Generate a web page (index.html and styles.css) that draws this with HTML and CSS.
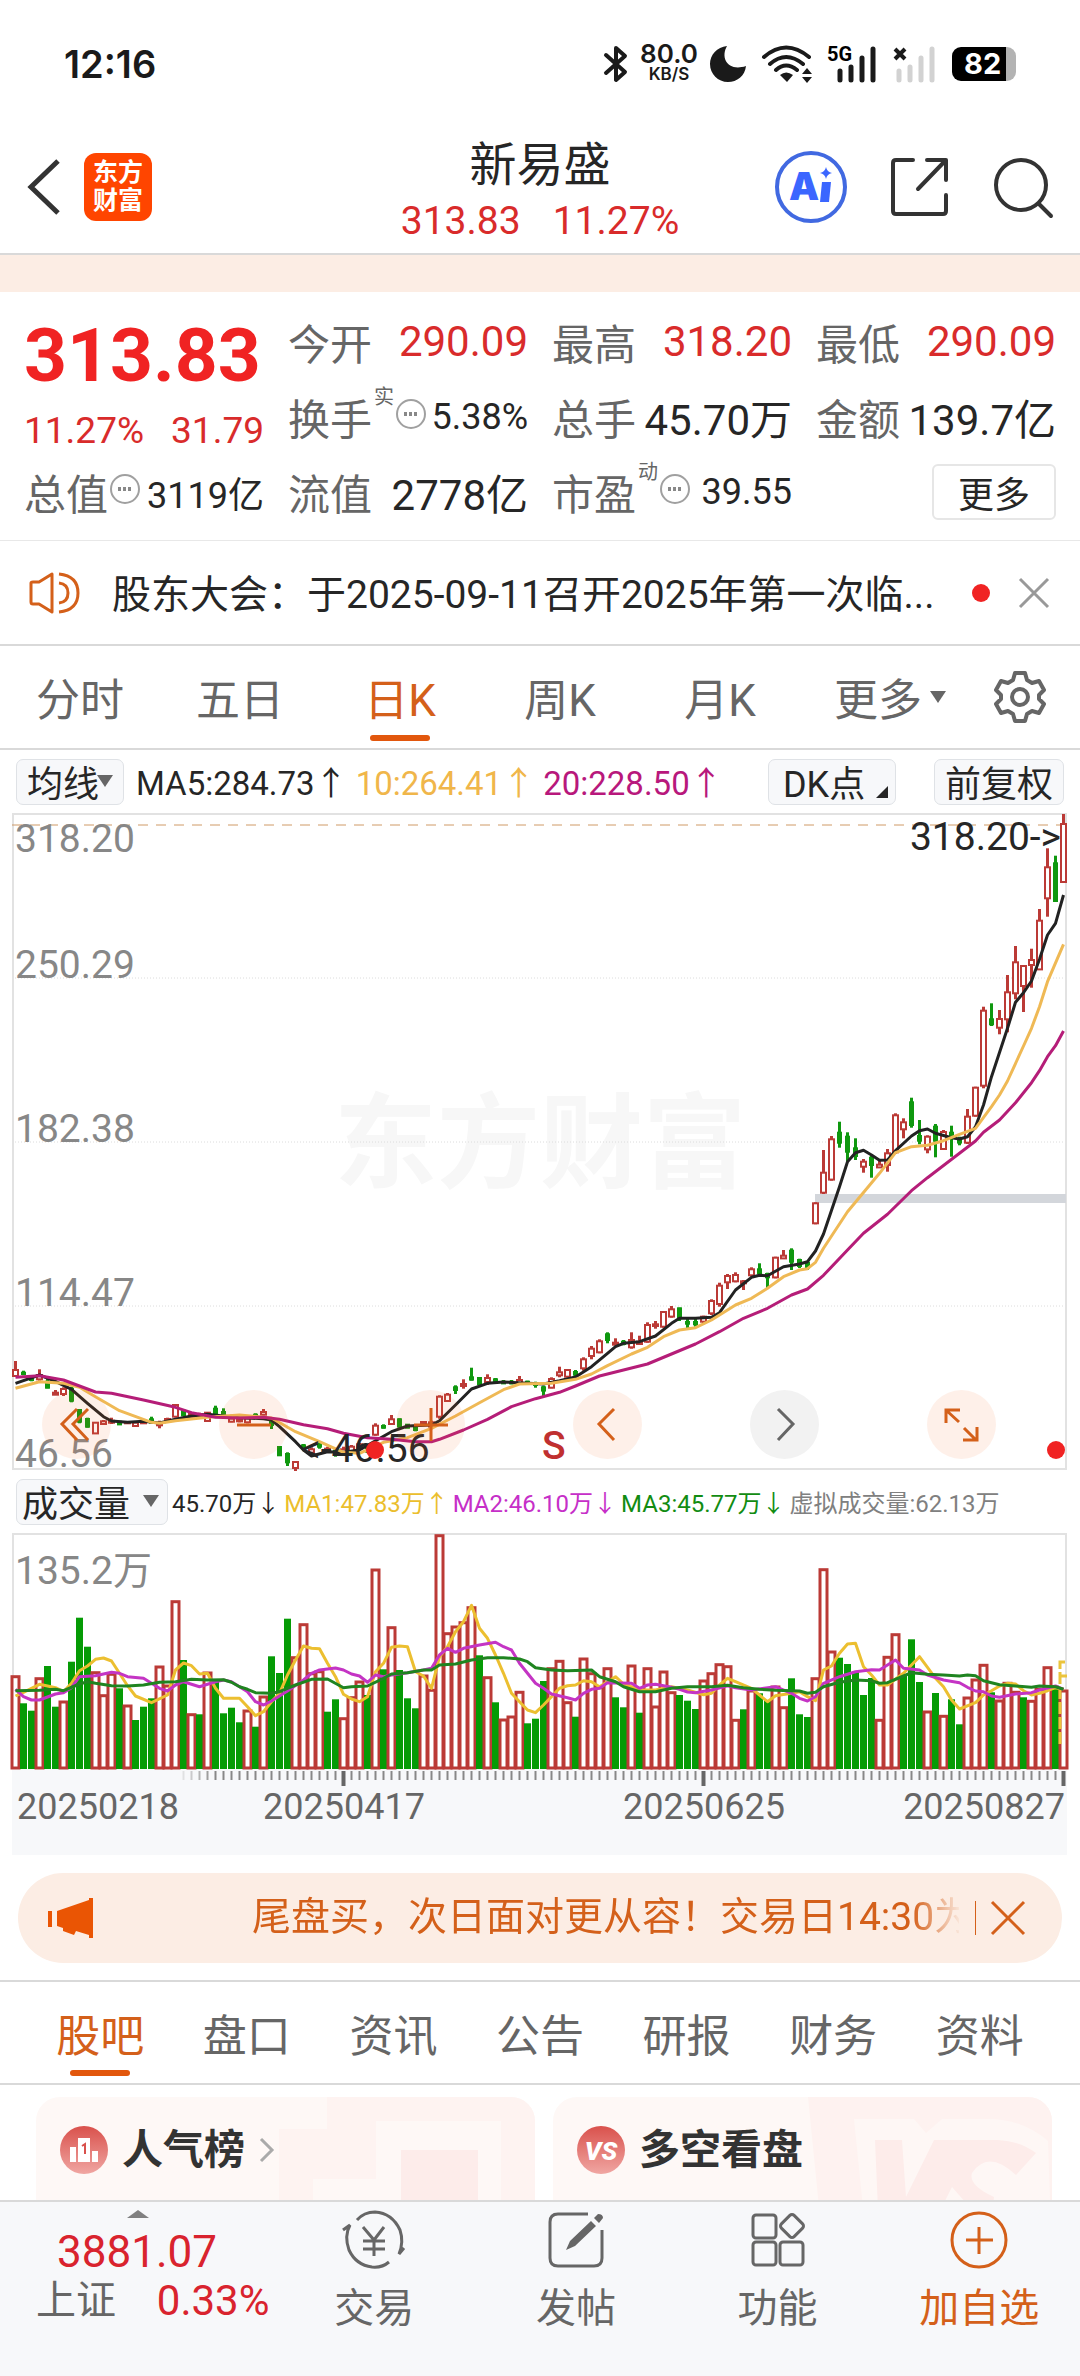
FILE: index.html
```html
<!DOCTYPE html>
<html lang="zh-CN">

<head>
    <meta charset="UTF-8">
    <meta name="viewport" content="width=device-width, initial-scale=1.0">
    <title>新易盛</title>
    <link rel="stylesheet" href="styles.css">
</head>

<body>
    <div class="status">
        <span class="clock">12:16</span>
        <div class="status-icons">
            <svg width="24" height="38" viewBox="0 0 24 38" fill="none" stroke="#1a1a1a" stroke-width="4" stroke-linejoin="round" stroke-linecap="round">
                <path d="M2 10 L21 27 L12 35 V3 L21 11 L2 28" />
            </svg>
            <div class="speed"><b>80.0</b><span>KB/S</span></div>
            <svg class="moon" width="38" height="38" viewBox="0 0 38 38">
                <path d="M18 1 C11 13 19 27 37 21 C36 31 28 37 19 37 C9 37 1 29 1 19 C1 10 8 2 18 1 Z" fill="#1a1a1a" />
            </svg>
            <svg class="wifi" width="52" height="38" viewBox="0 0 52 38" fill="none" stroke="#1a1a1a" stroke-width="4" stroke-linecap="round">
                <path d="M2 12 Q24 -7 47 12 M8 19 Q24 5 41 19 M14 25 Q24 16 35 25" />
                <path d="M18 30 Q24 25 31 30 L25 37 Z" fill="#1a1a1a" stroke="none" />
                <path d="M40 29 L45 23 L50 29 Z M40 32 L45 38 L50 32 Z" fill="#1a1a1a" stroke="none" />
            </svg>
            <svg class="signal" width="50" height="38" viewBox="0 0 50 38">
                <text x="0" y="16" class="net">5G</text>
                <path d="M13 35 V26 M24 35 V22 M35 35 V13 M46 35 V4" stroke="#1a1a1a" stroke-width="5" stroke-linecap="round" />
            </svg>
            <svg class="signal" width="43" height="38" viewBox="0 0 43 38">
                <path d="M2 4 L12 14 M12 4 L2 14" stroke="#1a1a1a" stroke-width="4" />
                <path d="M6 35 V26 M17 35 V22 M28 35 V13 M39 35 V4" stroke="#d2d2d2" stroke-width="5" stroke-linecap="round" />
            </svg>
            <div class="battery">82</div>
        </div>
    </div>

    <header class="header">
        <div class="header-left">
            <button class="icon-btn" aria-label="返回">
                <svg width="34" height="56" viewBox="0 0 34 56" fill="none" stroke="#333" stroke-width="5">
                    <path d="M31 2 L4 28 L31 54" />
                </svg>
            </button>
            <a href="#" class="logo">东方<br>财富</a>
        </div>
        <div class="title">
            <h1>新易盛</h1>
            <p class="up"><span>313.83</span><span>11.27%</span></p>
        </div>
        <div class="header-right">
            <button class="icon-btn" aria-label="AI">
                <svg width="72" height="72" viewBox="0 0 72 72">
                    <circle cx="36" cy="36" r="34" fill="none" stroke="#4169e1" stroke-width="4" />
                    <text x="14" y="49" class="ai">A</text>
                    <path d="M47 31 h9 l-2 20 h-9 z" fill="#3b66ff" />
                    <path d="M51 16 Q52 21 57 22 Q52 23 51 28 Q50 23 45 22 Q50 21 51 16 Z" fill="#3b66ff" />
                </svg>
            </button>
            <button class="icon-btn" aria-label="分享">
                <svg width="60" height="60" viewBox="0 0 60 60" fill="none" stroke="#333" stroke-width="4" stroke-linecap="round" stroke-linejoin="round">
                    <path d="M23 3 H6 Q3 3 3 6 V54 Q3 57 6 57 H53 Q56 57 56 54 V38 M37 3 H56 V23 M55 4 L28 32" />
                </svg>
            </button>
            <button class="icon-btn" aria-label="搜索">
                <svg width="60" height="60" viewBox="0 0 60 60" fill="none" stroke="#333" stroke-width="4" stroke-linecap="round">
                    <circle cx="28" cy="28" r="25" />
                    <path d="M46 47 L58 59" />
                </svg>
            </button>
        </div>
    </header>
    <div class="strip"></div>

    <section class="quote">
        <div class="price up">
            <strong>313.83</strong>
            <p><span>11.27%</span><span>31.79</span></p>
        </div>
        <div class="cell"><span>今开</span><b class="up">290.09</b></div>
        <div class="cell"><span>最高</span><b class="up">318.20</b></div>
        <div class="cell"><span>最低</span><b class="up">290.09</b></div>
        <div class="cell"><span>换手</span><sup>实</sup><i class="tip"></i><b class="small">5.38%</b></div>
        <div class="cell"><span>总手</span><b>45.70万</b></div>
        <div class="cell"><span>金额</span><b>139.7亿</b></div>
        <div class="cell"><span>总值</span><i class="tip"></i><b class="small">3119亿</b></div>
        <div class="cell"><span>流值</span><b>2778亿</b></div>
        <div class="cell"><span>市盈</span><sup>动</sup><i class="tip"></i><b class="small">39.55</b></div>
        <div class="cell"><button class="more">更多</button></div>
    </section>

    <section class="notice">
        <svg width="54" height="44" viewBox="0 0 54 44" fill="none" stroke="#d4601a" stroke-width="3" stroke-linejoin="round">
            <path d="M3 12 Q3 11 5 11 H11 L24 3 V41 L11 33 H5 Q3 33 3 31 Z M31 12 Q40 13 40 22 Q40 31 31 32 M31 3 Q50 5 50 22 Q50 39 31 41" />
        </svg>
        <a href="#">股东大会：于2025-09-11召开2025年第一次临...</a>
        <i class="dot"></i>
        <button class="icon-btn" aria-label="关闭">
            <svg width="32" height="32" viewBox="0 0 32 32" stroke="#999" stroke-width="3">
                <path d="M2 2 L30 30 M30 2 L2 30" />
            </svg>
        </button>
    </section>

    <nav class="periods">
        <button>分时</button>
        <button>五日</button>
        <button class="active">日K</button>
        <button>周K</button>
        <button>月K</button>
        <button>更多<i class="caret"></i></button>
        <button aria-label="设置">
            <svg width="54" height="54" viewBox="0 0 54 54" fill="none" stroke="#666" stroke-width="4" stroke-linejoin="round">
                <path d="M22 3 H32 L34 10 L39 13 L46 11 L51 20 L46 25 V29 L51 34 L46 43 L39 41 L34 44 L32 51 H22 L20 44 L15 41 L8 43 L3 34 L8 29 V25 L3 20 L8 11 L15 13 L20 10 Z" />
                <circle cx="27" cy="27" r="8" />
            </svg>
        </button>
    </nav>

    <div class="indicator">
        <button class="chip">均线<i class="caret"></i></button>
        <span class="ma5">MA5:284.73↑</span>
        <span class="ma10">10:264.41↑</span>
        <span class="ma20">20:228.50↑</span>
        <button class="chip dk">DK点<i class="corner"></i></button>
        <button class="chip">前复权</button>
    </div>

    <section class="chart">
        <svg id="kline" viewBox="0 0 1056 656"></svg>
        <div class="tools">
            <button aria-label="最左"><svg viewBox="0 0 69 69"><path d="M35 19 L20 34 L35 50 M46 19 L31 34 L46 50" /></svg></button>
            <button aria-label="缩小"><svg viewBox="0 0 69 69"><path d="M18 35 H52" /></svg></button>
            <button aria-label="放大"><svg viewBox="0 0 69 69"><path d="M18 35 H52 M35 18 V51" /></svg></button>
            <button aria-label="左移"><svg viewBox="0 0 69 69"><path d="M41 19 L26 34 L41 50" /></svg></button>
            <button aria-label="右移" class="off"><svg viewBox="0 0 69 69"><path d="M28 19 L43 34 L28 50" /></svg></button>
            <button aria-label="全屏"><svg viewBox="0 0 69 69"><path d="M19 33 V20 H33 M20 21 L32 32 M37 38 L49 50 M36 50 H50 V37" /></svg></button>
        </div>
    </section>

    <div class="indicator volume-info">
        <button class="chip">成交量<i class="caret"></i></button>
        <span class="v0">45.70万↓</span>
        <span class="v1">MA1:47.83万↑</span>
        <span class="v2">MA2:46.10万↓</span>
        <span class="v3">MA3:45.77万↓</span>
        <span class="v4">虚拟成交量:62.13万</span>
    </div>
    <section class="chart">
        <svg id="volume" viewBox="0 0 1056 321"></svg>
    </section>

    <aside class="banner">
        <svg width="48" height="40" viewBox="0 0 48 40" fill="#ea5504">
            <path d="M0 13 h4 v16 h-4 z M9 13 L41 2 V0 H45 V40 H41 V37 L28 33 L26 37 L15 33 V30 L9 28 Z" />
        </svg>
        <a href="#">尾盘买，次日面对更从容！交易日14:30为</a>
        <button class="icon-btn" aria-label="关闭">
            <svg width="34" height="34" viewBox="0 0 34 34" stroke="#d4601a" stroke-width="3">
                <path d="M1 1 L33 33 M33 1 L1 33" />
            </svg>
        </button>
    </aside>

    <nav class="tabs">
        <button class="active">股吧</button>
        <button>盘口</button>
        <button>资讯</button>
        <button>公告</button>
        <button>研报</button>
        <button>财务</button>
        <button>资料</button>
    </nav>

    <main class="feed">
        <a href="#" class="card">
            <svg class="deco" width="256" height="160" viewBox="0 0 256 160">
                <path d="M48 0 H256 V160 H0 V32 H48 Z" fill="#fef3f1" />
                <path d="M97 24 H222 V160 H34 V82 H97 Z" fill="#fef8f6" />
                <path d="M122 53 H199 V160 H122 Z" fill="#fdecea" />
            </svg>
            <svg width="48" height="48" viewBox="0 0 48 48">
                <defs>
                    <linearGradient id="red" x2="0" y2="1">
                        <stop offset="0" stop-color="#d9514c" />
                        <stop offset="1" stop-color="#f0a6a2" />
                    </linearGradient>
                </defs>
                <circle cx="24" cy="24" r="24" fill="url(#red)" />
                <path d="M10 21 h6 v15 h-6 z M18 12 h12 v24 h-12 z M32 25 h6 v11 h-6 z" fill="#fff" />
                <path d="M22 20 l3 -2 v10" fill="none" stroke="#d9514c" stroke-width="2" />
            </svg>
            <h2>人气榜</h2>
            <svg class="arrow" width="16" height="24" viewBox="0 0 16 24" fill="none" stroke="#aaa" stroke-width="3">
                <path d="M2 1 L13 12 L2 23" />
            </svg>
        </a>
        <a href="#" class="card">
            <svg class="deco" width="244" height="160" viewBox="0 0 244 160">
                <path d="M0 0 H244 V160 H16 Z" fill="#fef2f0" />
                <path d="M46 22 H106 L118 36 L134 22 H180 Q215 22 240 44 L244 160 H60 Z" fill="#fef7f5" />
                <path d="M67 43 H94 L98 100 L126 43 H190 Q212 44 228 56 L208 78 Q180 52 164 76 Q160 88 186 100 L180 160 H72 Z" fill="#fdecea" />
                <path d="M144 90 L158 106 H136 Z" fill="#fef7f5" />
            </svg>
            <svg width="48" height="48" viewBox="0 0 48 48">
                <circle cx="24" cy="24" r="24" fill="url(#red)" />
                <text x="24" y="34" class="vs">VS</text>
            </svg>
            <h2>多空看盘</h2>
        </a>
    </main>

    <footer class="bottom">
        <a href="#" class="index">
            <i class="caret-up"></i>
            <b>3881.07</b>
            <span class="name">上证</span><span class="pct">0.33%</span>
        </a>
        <a href="#">
            <svg width="64" height="60" viewBox="0 0 64 60" fill="none" stroke="#666" stroke-width="3">
                <path d="M15 10 Q22 2 33 2 Q50 3 58 20 Q62 32 57 44 L62 38 M47 52 Q40 58 30 57 Q14 55 7 40 Q2 26 8 15 L1 20" />
                <path d="M21 17 L32 30 L42 17 M32 30 V46 M21 31 H43 M21 39 H43" />
            </svg>
            交易
        </a>
        <a href="#">
            <svg width="60" height="60" viewBox="0 0 60 60" fill="none" stroke="#666" stroke-width="3">
                <path d="M42 4 H12 Q4 4 4 12 V48 Q4 56 12 56 H48 Q56 56 56 48 V20" />
                <path d="M20 40 L24 31 L45 11 L50 16 L29 36 Z M48 8 L52 4 Q57 4 57 8 L53 13 Z" fill="#666" stroke="none" />
            </svg>
            发帖
        </a>
        <a href="#">
            <svg width="60" height="60" viewBox="0 0 60 60" fill="none" stroke="#666" stroke-width="3">
                <rect x="5" y="5" width="23" height="23" rx="3" />
                <rect x="5" y="32" width="23" height="23" rx="3" />
                <rect x="32" y="32" width="23" height="23" rx="3" />
                <rect x="35" y="7" width="18" height="18" rx="3" transform="rotate(45 44 16)" />
            </svg>
            功能
        </a>
        <a href="#" class="add">
            <svg width="60" height="60" viewBox="0 0 60 60" fill="none" stroke="#d4601a" stroke-width="3">
                <circle cx="30" cy="30" r="27" />
                <path d="M17 30 H44 M30 17 V44" />
            </svg>
            加自选
        </a>
    </footer>

    <script src="script.js"></script>
</body>

</html>
```
FILE: styles.css
```css
* {
    box-sizing: border-box;
    font-family: Roboto, "Noto Sans CJK SC", sans-serif;
}

body,
html {
    margin: 0;
}

body {
    display: flex;
    flex-direction: column;
    height: 100vh;
    overflow: hidden;
    background-color: #fff;
    color: #262626;
}

body > * {
    flex-shrink: 0;
}

h1,
h2,
p {
    margin: 0;
    font-weight: 400;
}

b,
i {
    font-weight: 400;
    font-style: normal;
}

a {
    color: inherit;
    text-decoration: none;
}

svg {
    display: block;
    overflow: visible;
}

button {
    cursor: pointer;
    padding: 0;
    border: 0;
    background: none;
    color: inherit;
}

.up {
    color: #d92b2b;
}

/* status bar */
.status {
    display: flex;
    justify-content: space-between;
    align-items: center;
    height: 128px;
    padding: 0 64px;
    color: #1a1a1a;
}

.clock {
    font-family: Inter, sans-serif;
    font-size: 38px;
    font-weight: 600;
}

.status-icons {
    display: flex;
    align-items: center;
}

.speed {
    display: flex;
    flex-direction: column;
    align-items: center;
    width: 58px;
    margin: 0 11px 0 12px;
}

.speed b,
.speed span {
    font-family: Inter, sans-serif;
    font-size: 26px;
    font-weight: 600;
    line-height: 20px;
}

.speed span {
    font-size: 17px;
}

.moon {
    margin-right: 15px;
}

.wifi {
    margin-right: 13px;
}

.signal {
    margin-right: 16px;
}

.net {
    font-family: "Roboto";
    font-size: 20px;
    font-weight: 700;
}

.battery {
    width: 64px;
    height: 34px;
    padding-left: 12px;
    border-radius: 9px;
    background: linear-gradient(to right, #000 54px, #b3b3b3 54px);
    color: #fff;
    font-family: Inter, sans-serif;
    font-size: 29px;
    font-weight: 700;
    line-height: 34px;
}

/* header */
.header {
    display: grid;
    grid-template-columns: 1fr auto 1fr;
    align-items: center;
    height: 127px;
    padding: 0 27px;
    border-bottom: 2px solid #d9d9d9;
}

.header-left,
.header-right {
    display: flex;
    align-items: center;
    padding-bottom: 8px;
}

.header-right {
    justify-content: flex-end;
    gap: 43px;
}

.logo {
    width: 68px;
    height: 68px;
    margin-left: 23px;
    padding-top: 6px;
    border-radius: 12px;
    background-color: #ff4500;
    color: #fff;
    font-size: 25px;
    font-weight: 700;
    line-height: 28px;
    text-align: center;
}

.title {
    padding-top: 4px;
    text-align: center;
    line-height: 57px;
}

.title h1 {
    font-size: 47px;
}

.title p {
    display: flex;
    gap: 32px;
    font-size: 39px;
}

.ai {
    fill: #3b66ff;
    font-family: Inter, sans-serif;
    font-size: 38px;
    font-weight: 900;
}

.strip {
    height: 37px;
    background-color: #fcede4;
}

/* quote */
.quote {
    display: grid;
    grid-template-columns: repeat(4, 1fr);
    grid-auto-rows: 75px;
    column-gap: 24px;
    padding: 12px 24px 11px;
    border-bottom: 1px solid #e8e8e8;
}

.price {
    grid-row: span 2;
}

.price strong {
    display: block;
    color: #f02323;
    font-size: 75px;
    font-weight: 700;
    line-height: 102px;
}

.price p {
    display: flex;
    justify-content: space-between;
    font-size: 37px;
    line-height: 50px;
}

.cell {
    display: flex;
    align-items: center;
    gap: 2px;
    font-size: 42px;
    white-space: nowrap;
}

.cell span {
    color: #666;
}

.cell b,
.cell button {
    margin-left: auto;
}

.cell .small {
    font-size: 36px;
}

.cell sup {
    align-self: flex-start;
    color: #666;
    font-size: 20px;
    line-height: 36px;
}

.tip {
    position: relative;
    width: 30px;
    height: 30px;
    margin-bottom: 6px;
    border: 2px solid #a0a0a0;
    border-radius: 50%;
}

.tip::after {
    content: "";
    position: absolute;
    left: 5px;
    top: 11px;
    width: 16px;
    height: 4px;
    background: radial-gradient(circle, #888 2px, transparent 2px) 0 0 / 5px 4px;
}

.more {
    width: 124px;
    height: 56px;
    padding-bottom: 6px;
    border: 2px solid #e6e6e6;
    border-radius: 6px;
    font-size: 36px;
}

/* notice */
.notice {
    display: flex;
    align-items: center;
    height: 105px;
    padding: 0 30px 0 28px;
    border-bottom: 2px solid #d9d9d9;
    font-size: 39px;
}

.notice a {
    flex: 1;
    margin-left: 30px;
    padding-bottom: 4px;
    overflow: hidden;
    white-space: nowrap;
}

.dot {
    width: 18px;
    height: 18px;
    margin-right: 28px;
    border-radius: 50%;
    background-color: #f02323;
}

/* period tabs */
.periods {
    display: grid;
    grid-template-columns: repeat(5, 16fr) 18fr 8fr;
    height: 104px;
    padding-right: 20px;
    border-bottom: 2px solid #d9d9d9;
}

.periods button,
.tabs button {
    display: flex;
    position: relative;
    align-items: center;
    justify-content: center;
    color: #666;
    font-size: 44px;
}

.periods .active,
.tabs .active {
    color: #d4601a;
}

.periods .active::after,
.tabs .active::after {
    content: "";
    position: absolute;
    bottom: 7px;
    width: 60px;
    height: 6px;
    border-radius: 3px;
    background-color: #e2570d;
}

.caret {
    margin-left: 8px;
    border: 8px solid transparent;
    border-top: 12px solid #666;
    border-bottom: 0;
}

/* indicator rows */
.indicator {
    display: flex;
    align-items: center;
    height: 64px;
    padding: 0 16px;
    font-size: 33px;
    white-space: nowrap;
}

.indicator span {
    margin-right: 8px;
    padding-bottom: 2px;
}

.chip {
    display: flex;
    position: relative;
    align-items: center;
    height: 46px;
    margin-right: 12px;
    padding: 0 10px 2px;
    border: 1px solid #dfe2e6;
    border-radius: 7px;
    background-color: #f7f8fa;
    font-size: 36px;
}

.chip:last-child {
    margin-right: 0;
}

.chip .caret {
    margin: 0 0 0 -2px;
}

.indicator .dk {
    width: 128px;
    margin: 0 38px 0 auto;
    padding-left: 14px;
}

.corner {
    position: absolute;
    right: 7px;
    bottom: 6px;
    border-left: 12px solid transparent;
    border-bottom: 12px solid #262626;
}

.ma10 {
    color: #f0b64a;
}

.ma20 {
    color: #b8187c;
}

.volume-info {
    font-size: 24px;
}

.volume-info span {
    margin-right: 4px;
}

.volume-info .chip {
    width: 152px;
    margin-right: 4px;
    padding: 0 8px 2px 5px;
    justify-content: space-between;
}

.v1 {
    color: #ebbe2d;
}

.v2 {
    color: #c62fc8;
}

.v3 {
    color: #128c12;
}

.v4 {
    color: #808080;
}

/* charts */
.chart {
    position: relative;
    margin: 0 12px;
}

.chart > svg {
    width: 100%;
    height: auto;
}

.frame {
    fill: none;
    stroke: #e2e2e2;
    stroke-width: 2;
}

.grid {
    stroke: #dcdcdc;
    stroke-dasharray: 1 2;
}

.last {
    stroke: #cf9a66;
    stroke-dasharray: 10 8;
}

.band {
    fill: #d3d6db;
}

.axis {
    fill: #878787;
    font-size: 39px;
}

.mark {
    fill: #262626;
    font-size: 39px;
}

.sell {
    fill: #c03030;
    font-size: 39px;
    font-weight: 500;
}

.date {
    fill: #666;
    font-size: 36px;
}

.watermark {
    fill: #f7f7f7;
    font-size: 103px;
    font-weight: 700;
}

.wick {
    stroke-width: 3;
}

.rise {
    fill: #fff;
    stroke: #bb3a36;
    stroke-width: 2;
}

.fall {
    fill: #0f980f;
    stroke: #0f980f;
    stroke-width: 2;
}

.rise.wick,
.fall.wick,
.bar-rise {
    stroke-width: 3;
}

.bar-rise {
    fill: #fff;
    stroke: #bb3a36;
}

.bar-fall {
    fill: #059b05;
}

.line {
    fill: none;
    stroke-width: 3;
    stroke-linejoin: round;
}

.tools {
    display: flex;
    position: absolute;
    justify-content: space-between;
    bottom: 11px;
    left: 30px;
    right: 72px;
}

.tools button {
    width: 69px;
    height: 69px;
    border-radius: 50%;
    background-color: rgba(250, 110, 40, 0.1);
}

.tools .off {
    background-color: #f2f2f2;
}

.tools path {
    fill: none;
    stroke: #d4601a;
    stroke-width: 3;
}

.tools .off path {
    stroke: #666;
}

/* banner */
.banner {
    display: flex;
    align-items: center;
    height: 90px;
    margin: 18px 18px 17px;
    padding: 0 37px 0 30px;
    border-radius: 45px;
    background-color: #fcede4;
    color: #d4601a;
    font-size: 39px;
}

.banner a {
    flex: 1;
    height: 60px;
    margin: 0 16px 0 156px;
    overflow: hidden;
    line-height: 58px;
    white-space: nowrap;
    -webkit-mask-image: linear-gradient(to right, #000 660px, transparent 710px);
    mask-image: linear-gradient(to right, #000 660px, transparent 710px);
}

.banner button {
    padding-left: 15px;
    border-left: 1px solid #d4601a;
}

/* content tabs */
.tabs {
    display: grid;
    grid-template-columns: repeat(7, 1fr);
    height: 105px;
    padding: 0 27px;
    border-top: 2px solid #d9d9d9;
    border-bottom: 2px solid #d9d9d9;
}

.feed {
    display: grid;
    flex: 1 1 0;
    grid-template-columns: 1fr 1fr;
    gap: 18px;
    min-height: 0;
    padding: 12px 28px 0 36px;
    overflow: hidden;
}

.card {
    display: flex;
    position: relative;
    height: 160px;
    padding: 29px 24px 0;
    overflow: hidden;
    border-radius: 24px;
    background-color: #fef8f6;
}

.card > svg,
.card h2 {
    position: relative;
}

.card .deco {
    position: absolute;
    right: 0;
    top: 0;
}

.card h2 {
    margin-left: 14px;
    color: #333;
    font-size: 41px;
    font-weight: 700;
    line-height: 48px;
}

.card .arrow {
    margin: 12px 0 0 14px;
}

.vs {
    fill: #fff;
    font-size: 26px;
    font-style: italic;
    font-weight: 900;
    text-anchor: middle;
}

/* bottom bar */
.bottom {
    display: grid;
    grid-template-columns: 274fr repeat(4, 202fr);
    height: 176px;
    border-top: 2px solid #d9d9d9;
    background-color: #f7f8fa;
    color: #666;
}

.bottom a {
    display: flex;
    flex-direction: column;
    align-items: center;
    padding-top: 8px;
    font-size: 40px;
    line-height: 78px;
}

.bottom .add {
    color: #d4601a;
}

.bottom .index {
    display: grid;
    grid-template-columns: auto auto;
    align-content: start;
    justify-content: space-between;
    padding: 8px 4px 0 36px;
    line-height: 50px;
}

.caret-up {
    grid-column: span 2;
    justify-self: center;
    margin-right: 29px;
    border: 11px solid transparent;
    border-top: 0;
    border-bottom: 8px solid #808080;
}

.index b {
    grid-column: span 2;
    padding: 10px 0 0 21px;
    color: #d9232e;
    font-size: 44px;
    line-height: 48px;
}

.pct {
    color: #d9232e;
    font-size: 42px;
}
```
FILE: script.js
```js
// every value is in thirds of a pixel, one trading day is 8px wide
const day = (i) => 3.5 + i * 8
const px = (v) => +(v / 3).toFixed(1)
const shift = (by, rows) => rows.map(([dir, ...ys]) => [dir, ...ys.map((y) => y + by)])

// direction, high, body top, body bottom, low
const candles = [
    ...shift(1428, [
        ['r', 213, 240, 258, 258], ['g', 242, 248, 252, 256], ['g', 258, 262, 270, 274], ['r', 238, 255, 268, 272],
        ['g', 260, 275, 293, 295], ['r', 300, 308, 314, 314], ['r', 292, 297, 312, 318], ['g', 290, 296, 332, 337],
        ['g', 358, 360, 395, 400], ['g', 383, 387, 410, 413], ['r', 396, 398, 430, 432], ['r', 390, 394, 402, 402],
        ['r', 383, 392, 398, 402], ['g', 393, 395, 403, 404], ['r', 394, 397, 400, 402], ['r', 395, 398, 408, 409],
        ['r', 393, 396, 400, 402], ['g', 380, 388, 398, 400], ['r', 392, 400, 406, 415], ['r', 383, 387, 395, 398],
        ['r', 342, 345, 380, 382], ['g', 358, 362, 376, 378], ['r', 368, 372, 380, 382], ['r', 368, 372, 378, 380],
        ['r', 366, 368, 393, 394], ['g', 347, 356, 370, 374], ['g', 355, 366, 374, 376], ['r', 374, 386, 395, 397],
        ['r', 384, 388, 394, 397], ['r', 380, 385, 397, 400], ['g', 370, 374, 378, 380], ['r', 357, 366, 374, 376],
        ['g', 385, 390, 405, 417], ['g', 468, 471, 496, 498], ['g', 487, 492, 517, 528], ['r', 513, 516, 534, 543],
        ['g', 462, 466, 475, 480], ['r', 472, 478, 488, 492], ['g', 457, 464, 470, 476], ['r', 470, 476, 484, 486],
        ['g', 475, 482, 492, 500], ['r', 470, 478, 486, 490], ['r', 465, 470, 486, 490], ['r', 458, 463, 475, 478],
        ['g', 470, 475, 485, 488], ['r', 400, 407, 434, 437], ['g', 403, 408, 413, 416], ['r', 375, 388, 402, 405],
        ['g', 385, 388, 410, 413], ['g', 402, 404, 413, 415], ['g', 405, 412, 420, 424], ['r', 393, 396, 402, 405],
        ['r', 392, 397, 410, 415], ['r', 316, 320, 380, 386], ['r', 309, 314, 333, 336], ['g', 286, 292, 300, 312],
        ['r', 268, 282, 288, 296], ['g', 233, 262, 269, 272], ['g', 262, 264, 283, 286], ['r', 253, 264, 276, 285],
        ['g', 264, 268, 275, 278], ['g', 270, 275, 280, 282], ['g', 270, 275, 280, 283], ['r', 258, 270, 280, 284],
        ['g', 272, 275, 280, 282], ['g', 275, 280, 285, 293]
    ]),
    ...shift(978, [
        ['g', 737, 742, 752, 768], ['r', 712, 717, 743, 745], ['r', 680, 697, 706, 712], ['r', 688, 690, 710, 712],
        ['g', 690, 696, 704, 708], ['r', 652, 658, 685, 692], ['r', 618, 626, 648, 658], ['r', 598, 604, 637, 640],
        ['g', 577, 583, 600, 610], ['r', 595, 608, 614, 616], ['g', 600, 605, 612, 616], ['r', 577, 600, 622, 626],
        ['r', 587, 605, 612, 613], ['r', 547, 555, 605, 608], ['r', 543, 553, 558, 566], ['r', 513, 516, 560, 563],
        ['r', 498, 508, 530, 533], ['g', 503, 505, 535, 543], ['g', 537, 546, 551, 568], ['g', 537, 546, 553, 560],
        ['r', 527, 530, 545, 553], ['r', 478, 483, 520, 525], ['r', 428, 437, 492, 500], ['r', 402, 408, 427, 447],
        ['r', 397, 405, 424, 427], ['r', 420, 424, 430, 450], ['r', 382, 388, 406, 410], ['g', 370, 388, 400, 403],
        ['g', 398, 402, 412, 447], ['r', 350, 353, 412, 415], ['r', 330, 347, 355, 357], ['g', 325, 332, 365, 390],
        ['g', 356, 360, 378, 384], ['g', 363, 368, 383, 390], ['r', 187, 190, 250, 253]
    ]),
    ...shift(-42, [
        ['r', 1050, 1118, 1178, 1182], ['r', 1008, 1018, 1139, 1142], ['g', 965, 998, 1028, 1043], ['g', 997, 1010, 1055, 1083],
        ['g', 1015, 1045, 1068, 1080], ['r', 1077, 1085, 1100, 1118], ['g', 1068, 1073, 1095, 1133], ['r', 1082, 1094, 1102, 1103],
        ['r', 1047, 1060, 1095, 1115], ['r', 940, 946, 1057, 1062], ['r', 955, 967, 988, 1015], ['g', 893, 907, 975, 983],
        ['g', 960, 1008, 1022, 1033], ['r', 1006, 1010, 1048, 1060], ['g', 972, 980, 1022, 1072], ['r', 990, 996, 1047, 1050],
        ['g', 977, 998, 1012, 1070], ['g', 1010, 1018, 1028, 1036], ['r', 927, 950, 1028, 1032], ['r', 860, 863, 947, 950],
        ['r', 620, 632, 857, 865], ['g', 610, 658, 673, 678], ['r', 630, 657, 683, 703], ['r', 525, 577, 658, 697],
        ['r', 438, 487, 580, 598], ['r', 495, 498, 558, 636], ['r', 446, 480, 495, 563], ['r', 327, 362, 508, 510],
        ['r', 145, 202, 295, 350], ['g', 167, 190, 303, 305], ['r', 42, 72, 246, 248]
    ])
]

// day, y
const ma5 = [[0, 1708], [3, 1683], [5, 1702], [7, 1726], [9, 1768], [11, 1808], [12, 1821], [14, 1825], [16, 1822], [18, 1827], [20, 1816], [22, 1806], [24, 1801], [26, 1806], [28, 1811], [31, 1814], [32, 1818], [33, 1838], [35, 1883], [36, 1908], [37, 1926], [39, 1913], [41, 1915], [43, 1908], [45, 1880], [47, 1853], [49, 1836], [52, 1833], [53, 1820], [55, 1773], [57, 1725], [59, 1708], [61, 1704], [66, 1710], [68, 1700], [70, 1689], [72, 1658], [74, 1618], [75, 1598], [76, 1588], [78, 1583], [80, 1566], [82, 1528], [83, 1513], [85, 1513], [87, 1510], [88, 1496], [90, 1428], [92, 1390], [93, 1384], [94, 1385], [96, 1358], [98, 1350], [99, 1343], [100, 1311], [101, 1260], [103, 1118], [104, 1043], [105, 1016], [106, 1009], [107, 1023], [108, 1039], [109, 1038], [110, 1010], [112, 966], [113, 950], [114, 945], [115, 958], [117, 971], [118, 975], [119, 968], [120, 938], [121, 873], [122, 788], [124, 643], [125, 565], [126, 536], [127, 501], [128, 436], [129, 363], [130, 328], [131, 243]]
const ma10 = [[0, 1723], [3, 1703], [6, 1708], [8, 1720], [10, 1748], [13, 1790], [17, 1825], [18, 1828], [20, 1820], [24, 1810], [28, 1803], [32, 1812], [35, 1853], [38, 1883], [41, 1915], [43, 1918], [46, 1885], [49, 1871], [52, 1843], [55, 1806], [58, 1766], [61, 1727], [63, 1710], [67, 1708], [70, 1696], [72, 1680], [74, 1655], [77, 1620], [79, 1600], [81, 1568], [83, 1548], [85, 1541], [87, 1518], [90, 1473], [92, 1453], [94, 1423], [96, 1388], [98, 1368], [99, 1364], [100, 1345], [101, 1303], [104, 1193], [108, 1078], [110, 1016], [112, 998], [114, 994], [116, 980], [118, 961], [120, 943], [122, 878], [123, 843], [124, 801], [126, 696], [127, 643], [128, 578], [129, 503], [131, 391]]
const ma20 = [[0, 1690], [3, 1685], [6, 1698], [10, 1734], [12, 1738], [16, 1758], [20, 1780], [22, 1796], [25, 1810], [28, 1812], [31, 1810], [33, 1816], [36, 1832], [39, 1844], [41, 1858], [44, 1871], [47, 1876], [50, 1883], [52, 1883], [53, 1876], [56, 1848], [59, 1816], [62, 1778], [65, 1754], [68, 1735], [70, 1716], [73, 1686], [76, 1668], [79, 1650], [82, 1620], [85, 1590], [88, 1553], [91, 1513], [94, 1483], [97, 1443], [99, 1425], [101, 1384], [104, 1308], [106, 1258], [109, 1201], [112, 1130], [114, 1091], [118, 1018], [120, 981], [121, 955], [123, 918], [125, 866], [127, 806], [128, 770], [129, 728], [130, 695], [131, 651]]

// top of each volume bar, green ones are listed in fallDays
const volumes = [467, 550, 572, 473, 438, 560, 543, 425, 293, 380, 455, 524, 460, 505, 555, 600, 560, 535, 438, 495, 242, 420, 581, 583, 456, 480, 580, 563, 607, 570, 620, 528, 409, 459, 296, 410, 311, 458, 452, 575, 538, 593, 530, 483, 525, 147, 448, 320, 450, 535, 565, 465, 508, 44, 338, 318, 305, 260, 406, 470, 547, 597, 588, 514, 610, 596, 483, 443, 421, 545, 590, 414, 458, 500, 443, 532, 562, 435, 578, 443, 558, 453, 515, 525, 542, 567, 480, 458, 431, 437, 598, 568, 510, 520, 540, 498, 560, 475, 583, 591, 473, 146, 393, 413, 432, 455, 525, 474, 598, 409, 341, 465, 358, 486, 573, 519, 586, 538, 613, 531, 477, 433, 517, 540, 487, 514, 532, 541, 505, 440, 497, 510]
const fallDays = [1, 2, 4, 5, 7, 8, 9, 13, 15, 16, 17, 21, 23, 25, 26, 27, 28, 30, 32, 33, 34, 39, 40, 44, 46, 48, 49, 50, 58, 60, 64, 65, 66, 70, 75, 76, 78, 83, 84, 85, 91, 93, 94, 97, 98, 99, 103, 104, 105, 106, 107, 111, 112, 113, 115, 117, 118, 122, 126, 130]
const vma1 = [[0, 528], [1, 517], [3, 493], [5, 503], [6, 515], [7, 490], [8, 452], [9, 438], [10, 418], [11, 414], [12, 423], [13, 460], [14, 497], [15, 528], [17, 548], [19, 525], [20, 450], [21, 429], [22, 437], [23, 462], [24, 460], [25, 505], [26, 535], [28, 535], [29, 560], [30, 587], [31, 575], [32, 545], [33, 520], [34, 465], [35, 420], [36, 378], [37, 385], [38, 386], [39, 430], [40, 470], [41, 523], [42, 537], [43, 545], [44, 530], [45, 455], [46, 430], [47, 382], [48, 378], [49, 380], [50, 455], [51, 468], [52, 505], [53, 410], [54, 380], [55, 335], [56, 305], [57, 256], [58, 325], [59, 355], [60, 405], [61, 460], [62, 520], [63, 545], [64, 570], [65, 578], [66, 555], [67, 530], [68, 505], [69, 497], [70, 495], [71, 482], [72, 485], [73, 500], [74, 485], [75, 470], [76, 492], [77, 500], [78, 510], [80, 510], [82, 500], [84, 510], [86, 524], [87, 520], [88, 495], [89, 475], [90, 485], [92, 505], [93, 525], [94, 545], [95, 527], [97, 520], [98, 515], [99, 530], [100, 542], [101, 450], [102, 438], [103, 400], [104, 372], [105, 370], [106, 440], [107, 465], [108, 495], [109, 495], [111, 460], [112, 435], [113, 410], [114, 442], [115, 475], [116, 500], [117, 540], [118, 567], [120, 548], [121, 525], [122, 512], [123, 498], [124, 490], [125, 492], [126, 512], [127, 525], [128, 520], [129, 512], [130, 503], [131, 508]]
const vma2 = [[0, 508], [1, 530], [2, 540], [3, 540], [5, 522], [6, 518], [7, 503], [8, 470], [10, 467], [11, 462], [12, 457], [13, 460], [14, 470], [16, 475], [17, 490], [18, 505], [19, 513], [20, 495], [21, 485], [23, 500], [25, 485], [26, 480], [27, 485], [29, 515], [30, 545], [31, 555], [32, 543], [34, 513], [36, 480], [37, 460], [38, 450], [40, 444], [41, 450], [42, 462], [43, 468], [44, 487], [45, 465], [46, 470], [47, 465], [49, 458], [51, 450], [52, 445], [53, 405], [54, 385], [55, 397], [56, 385], [58, 375], [60, 367], [61, 380], [62, 390], [63, 430], [65, 490], [66, 505], [67, 522], [69, 533], [70, 540], [71, 520], [72, 508], [73, 505], [74, 488], [77, 490], [78, 505], [79, 495], [80, 493], [82, 502], [83, 508], [84, 516], [85, 518], [87, 510], [89, 497], [90, 503], [92, 510], [95, 500], [97, 520], [98, 535], [99, 543], [100, 530], [101, 490], [103, 470], [105, 455], [107, 449], [108, 450], [109, 435], [110, 420], [111, 445], [113, 450], [114, 465], [116, 480], [118, 488], [119, 502], [120, 513], [121, 515], [122, 528], [123, 532], [125, 522], [127, 518], [128, 510], [130, 498], [131, 508]]
const vma3 = [[0, 512], [3, 511], [5, 508], [6, 512], [8, 492], [9, 485], [10, 490], [12, 497], [14, 498], [16, 495], [18, 487], [20, 485], [22, 478], [24, 480], [26, 479], [27, 487], [28, 500], [29, 508], [30, 518], [32, 520], [33, 515], [35, 495], [37, 478], [39, 477], [41, 503], [42, 500], [44, 498], [46, 475], [47, 462], [49, 458], [51, 450], [52, 450], [53, 435], [55, 432], [57, 420], [59, 413], [61, 413], [63, 417], [64, 425], [65, 443], [67, 450], [69, 452], [72, 450], [73, 470], [75, 485], [76, 500], [78, 515], [80, 515], [82, 505], [84, 500], [87, 500], [89, 496], [91, 503], [93, 508], [95, 511], [97, 512], [98, 513], [99, 520], [100, 517], [101, 500], [103, 487], [105, 480], [107, 482], [108, 490], [109, 488], [111, 468], [112, 458], [114, 463], [116, 465], [118, 468], [119, 465], [120, 467], [121, 482], [123, 494], [125, 498], [127, 502], [128, 498], [130, 500], [131, 508]]

const line = (points, color, by = 0) =>
    `<polyline class="line" stroke="${color}" points="${points.map(([i, y]) => `${day(i)},${px(y + by)}`).join(' ')}" />`

const renderKline = () => {
    let html = `<text class="watermark" x="528" y="366" text-anchor="middle">东方财富</text>`
    html += [164, 328, 492].map((y) => `<line class="grid" x1="0" x2="1054" y1="${y}" y2="${y}" />`).join('')
    html += `<rect class="frame" x="1" y="0" width="1053" height="655" />
        <line class="last" x1="0" x2="1054" y1="11" y2="11" />
        <rect class="band" x="803" y="380" width="251" height="9" />
        <text class="axis" x="3" y="38">318.20</text>
        <text class="axis" x="3" y="164">250.29</text>
        <text class="axis" x="3" y="328">182.38</text>
        <text class="axis" x="3" y="492">114.47</text>
        <text class="axis" x="3" y="653">46.56</text>`

    candles.forEach(([dir, high, top, bottom, low], i) => {
        const type = dir === 'r' ? 'rise' : 'fall'
        const h = Math.max(px(bottom - top), 1)
        const w = dir === 'r' ? 5 : 3
        html += `<line class="${type} wick" x1="${day(i)}" x2="${day(i)}" y1="${px(high)}" y2="${px(low)}" />`
        html += `<rect class="${type}" x="${day(i) - w / 2}" y="${px(top)}" width="${w}" height="${h}" />`
    })

    html += line(ma5, '#222') + line(ma10, '#efb955') + line(ma20, '#b51d78')
    html += `<text class="mark" x="1049" y="36" text-anchor="end">318.20-&gt;</text>
        <text class="mark" x="289" y="648">&lt;-46.56</text>
        <text class="sell" x="530" y="645">S</text>
        <circle cx="363" cy="636" r="9" fill="#f02323" />
        <circle cx="1044" cy="636" r="9" fill="#f02323" />`
    document.querySelector('#kline').innerHTML = html
}

const renderVolume = () => {
    let html = `<rect x="0" y="235" width="1055" height="86" fill="#f7f8fa" />
        <path class="frame" d="M1 235 V0 H1054 V235" />
        <text class="axis" x="3" y="50">135.2万</text>`

    volumes.forEach((v, i) => {
        const top = px(v - 42)
        if (fallDays.includes(i)) {
            html += `<rect class="bar-fall" x="${day(i) - 3.5}" y="${top}" width="7" height="${235 - top}" />`
        } else {
            html += `<rect class="bar-rise" x="${day(i) - 3.5}" y="${top + 1}" width="7" height="${233 - top}" />`
        }
    })
    // estimated volume for the current day
    html += `<path d="M1048 210 V128 H1055 M1048 142 H1055" fill="none" stroke="#ebc43c" stroke-width="3" stroke-dasharray="12 3" />`
    html += line(vma1, '#ecbf30', -42) + line(vma2, '#c434c4', -42) + line(vma3, '#1f8420', -42)

    // time axis ticks
    for (let i = 21; i < 132; i++) {
        const major = [41, 86, 131].includes(i)
        html += `<line x1="${day(i)}" x2="${day(i)}" y1="237" y2="${major ? 252 : 246}" stroke="${major ? '#666' : '#888'}" stroke-width="${major ? 4 : 2}" opacity="${Math.min(1, (i - 20) / 5)}" />`
    }
    html += `<text class="date" x="5" y="285">20250218</text>
        <text class="date" x="332" y="285" text-anchor="middle">20250417</text>
        <text class="date" x="692" y="285" text-anchor="middle">20250625</text>
        <text class="date" x="1053" y="285" text-anchor="end">20250827</text>`
    document.querySelector('#volume').innerHTML = html
}

renderKline()
renderVolume()
```
